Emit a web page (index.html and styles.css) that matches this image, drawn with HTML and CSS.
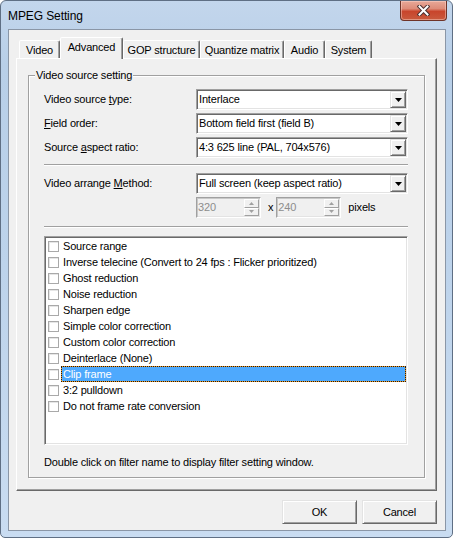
FILE: index.html
```html
<!DOCTYPE html>
<html>
<head>
<meta charset="utf-8">
<title>MPEG Setting</title>
<link rel="stylesheet" href="styles.css">
</head>
<body>
<div class="window">
  <div class="titlebar">
    <span class="title">MPEG Setting</span>
    <div class="close">
      <svg width="13" height="11" viewBox="0 0 13 11">
        <path d="M2.5 1.5 L10.5 9.5 M10.5 1.5 L2.5 9.5" stroke="#4a3030" stroke-width="4" stroke-linecap="square" fill="none"/>
        <path d="M2.5 1.5 L10.5 9.5 M10.5 1.5 L2.5 9.5" stroke="#ffffff" stroke-width="2" stroke-linecap="square" fill="none"/>
      </svg>
    </div>
  </div>
  <div class="client">
    <div class="tabs">
      <div class="tabstrip">
        <div class="tab t-video">Video</div>
        <div class="tab sel t-adv">Advanced</div>
        <div class="tab t-gop">GOP structure</div>
        <div class="tab t-quant">Quantize matrix</div>
        <div class="tab t-audio">Audio</div>
        <div class="tab t-sys">System</div>
      </div>
      <div class="panel">
        <fieldset class="group">
          <legend>Video source setting</legend>
          <div class="gbody">
            <div class="row">
              <span class="lbl">Video source <u>t</u>ype:</span>
              <div class="combo"><span class="cval">Interlace</span><span class="drop"><svg width="7" height="4" viewBox="0 0 7 4"><polygon points="0,0 7,0 3.5,4" fill="#000"/></svg></span></div>
            </div>
            <div class="row">
              <span class="lbl"><u>F</u>ield order:</span>
              <div class="combo"><span class="cval">Bottom field first (field B)</span><span class="drop"><svg width="7" height="4" viewBox="0 0 7 4"><polygon points="0,0 7,0 3.5,4" fill="#000"/></svg></span></div>
            </div>
            <div class="row">
              <span class="lbl">Source <u>a</u>spect ratio:</span>
              <div class="combo"><span class="cval">4:3 625 line (PAL, 704x576)</span><span class="drop"><svg width="7" height="4" viewBox="0 0 7 4"><polygon points="0,0 7,0 3.5,4" fill="#000"/></svg></span></div>
            </div>
            <div class="sep sep1"></div>
            <div class="row">
              <span class="lbl">Video arrange <u>M</u>ethod:</span>
              <div class="combo"><span class="cval">Full screen (keep aspect ratio)</span><span class="drop"><svg width="7" height="4" viewBox="0 0 7 4"><polygon points="0,0 7,0 3.5,4" fill="#000"/></svg></span></div>
            </div>
            <div class="row spinrow">
              <div class="spin">
                <span class="sval">320</span>
                <span class="ud">
                  <span class="udb"><svg width="5" height="3" viewBox="0 0 5 3"><polygon points="2.5,0 5,3 0,3" fill="#a0a0a0"/></svg></span>
                  <span class="udb"><svg width="5" height="3" viewBox="0 0 5 3"><polygon points="0,0 5,0 2.5,3" fill="#a0a0a0"/></svg></span>
                </span>
              </div>
              <span class="times">x</span>
              <div class="spin">
                <span class="sval">240</span>
                <span class="ud">
                  <span class="udb"><svg width="5" height="3" viewBox="0 0 5 3"><polygon points="2.5,0 5,3 0,3" fill="#a0a0a0"/></svg></span>
                  <span class="udb"><svg width="5" height="3" viewBox="0 0 5 3"><polygon points="0,0 5,0 2.5,3" fill="#a0a0a0"/></svg></span>
                </span>
              </div>
              <span class="pixels">pixels</span>
            </div>
            <div class="sep sep2"></div>
            <div class="list">
              <div class="item"><span class="cb"></span><span class="itxt">Source range</span></div>
              <div class="item"><span class="cb"></span><span class="itxt">Inverse telecine (Convert to 24 fps : Flicker prioritized)</span></div>
              <div class="item"><span class="cb"></span><span class="itxt">Ghost reduction</span></div>
              <div class="item"><span class="cb"></span><span class="itxt">Noise reduction</span></div>
              <div class="item"><span class="cb"></span><span class="itxt">Sharpen edge</span></div>
              <div class="item"><span class="cb"></span><span class="itxt">Simple color correction</span></div>
              <div class="item"><span class="cb"></span><span class="itxt">Custom color correction</span></div>
              <div class="item"><span class="cb"></span><span class="itxt">Deinterlace (None)</span></div>
              <div class="item selected"><span class="cb"></span><span class="itxt">Clip frame</span></div>
              <div class="item"><span class="cb"></span><span class="itxt">3:2 pulldown</span></div>
              <div class="item"><span class="cb"></span><span class="itxt">Do not frame rate conversion</span></div>
            </div>
            <div class="hint">Double click on filter name to display filter setting window.</div>
          </div>
        </fieldset>
      </div>
    </div>
    <div class="buttons">
      <div class="btn">OK</div>
      <div class="btn">Cancel</div>
    </div>
  </div>
</div>
</body>
</html>
```
FILE: styles.css
```css
html, body {
  margin: 0;
  padding: 0;
  background: #ffffff;
}
body {
  font-family: "Liberation Sans", Arial, sans-serif;
  font-size: 11px;
  letter-spacing: -0.17px;
  line-height: 13px;
  color: #000;
}
.window {
  width: 453px;
  height: 538px;
  box-sizing: border-box;
  border: 1px solid #5f6f84;
  border-radius: 6px 6px 5px 5px;
  background: linear-gradient(180deg, #c3d6ec 0%, #b8cfe8 12%, #bdd3eb 50%, #c9dcf1 100%);
  padding: 0 6px 6px 7px;
  display: flex;
  flex-direction: column;
}
.titlebar {
  height: 28px;
  flex: none;
  display: flex;
  align-items: flex-start;
  margin-right: -6px;
}
.title {
  padding-top: 8px;
  font-size: 12px;
  line-height: 14px;
  letter-spacing: -0.1px;
}
.close {
  margin-left: auto;
  margin-right: 5px;
  width: 47px;
  height: 20px;
  box-sizing: border-box;
  border: 1px solid #6e3328;
  border-top: none;
  border-radius: 0 0 4px 4px;
  background: linear-gradient(180deg, #e8a898 0%, #de8c79 40%, #c8452c 55%, #c95a3e 100%);
  box-shadow: inset 0 0 0 1px rgba(255, 220, 210, 0.45);
  display: flex;
  align-items: center;
  justify-content: center;
}
.client {
  flex: 1;
  background: #f0f0f0;
  border: 1px solid #8a96a6;
  display: flex;
  flex-direction: column;
}
.tabs {
  margin: 7px 0 0 7px;
  width: 421px;
}
.tabstrip {
  display: flex;
  align-items: flex-end;
  height: 21px;
  padding-left: 3px;
  position: relative;
  z-index: 1;
}
.tab {
  box-sizing: border-box;
  height: 18px;
  padding-top: 3px;
  text-align: center;
  background: #f0f0f0;
  border: 1px solid;
  border-bottom: none;
  border-color: #ffffff #696969 transparent #ffffff;
  border-radius: 2px 2px 0 0;
  box-shadow: inset -1px 0 0 #a0a0a0;
  white-space: nowrap;
}
.tab.sel {
  height: 22px;
  margin-bottom: -1px;
  padding-top: 3px;
}
.t-video { width: 41px; }
.t-adv { width: 63px; }
.t-gop { width: 77px; }
.t-quant { width: 84px; }
.t-audio { width: 41px; }
.t-sys { width: 47px; }
.panel {
  box-sizing: border-box;
  height: 433px;
  border: 1px solid;
  border-color: #ffffff #696969 #696969 #ffffff;
  box-shadow: inset -1px -1px 0 #a0a0a0;
  background: #f0f0f0;
  padding-left: 11px;
}
.group {
  margin: 10px 0 0 0;
  padding: 0;
  width: 397px;
  box-sizing: border-box;
  border: 1px solid #a0a0a0;
  box-shadow: 1px 1px 0 #ffffff, inset 1px 1px 0 #ffffff;
  min-inline-size: 0;
}
.group legend {
  margin-left: 6px;
  padding: 0 1px;
  background: #f0f0f0;
  line-height: 13px;
}
.gbody {
  padding: 7px 16px 8px 15px;
}
.row {
  display: flex;
  align-items: center;
  height: 21px;
}
.row + .row {
  margin-top: 3px;
}
.lbl {
  width: 152px;
  flex: none;
  white-space: nowrap;
}
.combo {
  width: 212px;
  height: 21px;
  box-sizing: border-box;
  background: #ffffff;
  border: 1px solid;
  border-color: #a0a0a0 #ffffff #ffffff #a0a0a0;
  box-shadow: inset 1px 1px 0 #696969, inset -1px -1px 0 #e3e3e3;
  display: flex;
  align-items: center;
}
.cval {
  padding-left: 2px;
  white-space: nowrap;
}
.drop {
  margin: 0 1px 0 auto;
  width: 16px;
  height: 17px;
  box-sizing: border-box;
  background: #f0f0f0;
  border: 1px solid;
  border-color: #e3e3e3 #696969 #696969 #e3e3e3;
  box-shadow: inset 1px 1px 0 #ffffff, inset -1px -1px 0 #a0a0a0;
  display: flex;
  align-items: center;
  justify-content: center;
}
.drop svg {
  display: block;
  margin-left: 1px;
}
.sep {
  height: 0;
  border-top: 1px solid #a0a0a0;
  border-bottom: 1px solid #ffffff;
}
.sep1 {
  margin: 6px 0 7px;
}
.sep2 {
  margin: 8px 0 8px;
}
.spinrow {
  padding-left: 152px;
}
.spin {
  width: 65px;
  height: 21px;
  box-sizing: border-box;
  background: #f0f0f0;
  border: 1px solid;
  border-color: #a0a0a0 #ffffff #ffffff #a0a0a0;
  box-shadow: inset 1px 1px 0 #c8c8c8, inset -1px -1px 0 #e3e3e3;
  display: flex;
  align-items: center;
}
.sval {
  padding-left: 1px;
  color: #8d8d8d;
}
.ud {
  margin: 0 1px 0 auto;
  width: 15px;
  height: 17px;
  display: flex;
  flex-direction: column;
}
.udb {
  flex: 1;
  box-sizing: border-box;
  border: 1px solid;
  border-color: #ffffff #a0a0a0 #a0a0a0 #ffffff;
  display: flex;
  align-items: center;
  justify-content: center;
}
.udb svg {
  display: block;
}
.times {
  margin-left: 7px;
  margin-right: 3px;
}
.pixels {
  margin-left: 7px;
}
.list {
  height: 209px;
  box-sizing: border-box;
  background: #ffffff;
  border: 1px solid;
  border-color: #a0a0a0 #ffffff #ffffff #a0a0a0;
  box-shadow: inset 1px 1px 0 #696969, inset -1px -1px 0 #e3e3e3;
  padding: 1px 1px 0 1px;
}
.item {
  display: flex;
  align-items: center;
  height: 16px;
}
.cb {
  flex: none;
  width: 11px;
  height: 11px;
  box-sizing: border-box;
  margin-left: 2px;
  border: 1px solid #a9a9a9;
  background: #ffffff;
  box-shadow: inset 1px 1px 0 #e6e6e6;
}
.itxt {
  margin-left: 2px;
  padding-left: 1px;
  height: 16px;
  line-height: 16px;
  box-sizing: border-box;
  border: 1px solid transparent;
  line-height: 14px;
  white-space: nowrap;
}
.item.selected .itxt {
  flex: 1;
  color: #ffffff;
  border: 1px dotted #1a1a1a;
  background: linear-gradient(#4ea9fd, #4ea9fd) padding-box, #f39a1e border-box;
}
.hint {
  margin-top: 11px;
  white-space: nowrap;
}
.buttons {
  display: flex;
  justify-content: flex-end;
  gap: 5px;
  margin: 9px 8px 0 0;
}
.btn {
  width: 75px;
  height: 24px;
  box-sizing: border-box;
  background: #f0f0f0;
  border: 1px solid;
  border-color: #e3e3e3 #696969 #696969 #e3e3e3;
  box-shadow: inset 1px 1px 0 #ffffff, inset -1px -1px 0 #a0a0a0;
  display: flex;
  align-items: center;
  justify-content: center;
}
```
